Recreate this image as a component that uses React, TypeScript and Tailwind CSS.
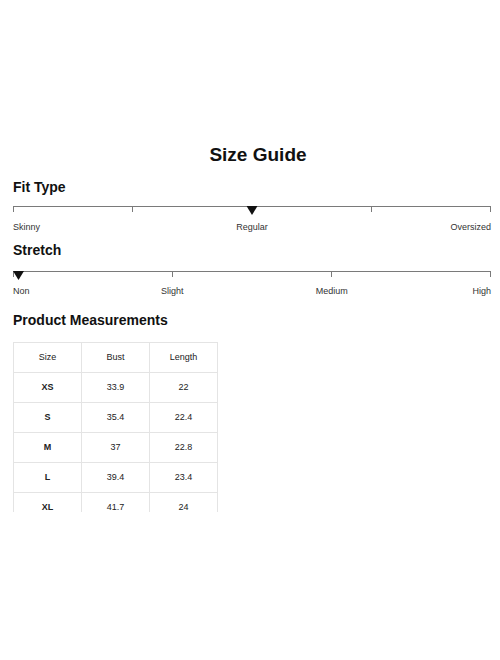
const rows = [
  ["XS", "33.9", "22"],
  ["S", "35.4", "22.4"],
  ["M", "37", "22.8"],
  ["L", "39.4", "23.4"],
  ["XL", "41.7", "24"],
]

function Arrow({ className }: { className: string }) {
  return (
    <svg className={className} width="11" height="9" viewBox="0 0 11 9">
      <path d="M0 0 H11 L5.5 9 Z" fill="#111" />
    </svg>
  )
}

function Ticks({ count }: { count: number }) {
  return (
    <div className="flex justify-between border-t border-[#7a7a7a]">
      {Array.from({ length: count }).map((_, i) => (
        <div key={i} className="w-px h-[5px] bg-[#7a7a7a]" />
      ))}
    </div>
  )
}

export default function App() {
  return (
    <div className="w-[500px] h-[660px] bg-white text-[#222] pt-[143px]" style={{ fontFamily: "'Liberation Sans', Arial, sans-serif" }}>
      <h1 className="text-[19px] leading-[24px] font-bold text-center pl-[16px] text-[#111]">Size Guide</h1>

      <div className="px-[13px] pr-[9px]">
        <h2 className="mt-[11px] text-[14px] leading-[18px] font-bold text-[#111]">Fit Type</h2>
        <div className="relative mt-[10px]">
          <Ticks count={5} />
          <Arrow className="absolute top-0 left-1/2 -translate-x-1/2" />
        </div>
        <div className="grid grid-cols-3 mt-[9px] text-[9px] leading-[12px] text-[#333]">
          <span>Skinny</span>
          <span className="text-center">Regular</span>
          <span className="text-right">Oversized</span>
        </div>

        <h2 className="mt-[8px] text-[14px] leading-[18px] font-bold text-[#111]">Stretch</h2>
        <div className="relative mt-[12px]">
          <Ticks count={4} />
          <Arrow className="absolute top-0 left-0" />
        </div>
        <div className="grid grid-cols-6 mt-[8px] text-[9px] leading-[12px] text-[#333]">
          <span>Non</span>
          <span className="col-span-2 text-center">Slight</span>
          <span className="col-span-2 text-center">Medium</span>
          <span className="text-right">High</span>
        </div>

        <h2 className="mt-[14px] text-[14px] leading-[18px] font-bold text-[#111]">Product Measurements</h2>

        <div className="mt-[13px] h-[170px] overflow-hidden w-[205px]">
          <table className="w-[205px] border-collapse text-[9px] text-[#222] table-fixed">
            <thead>
              <tr className="h-[30px]">
                {["Size", "Bust", "Length"].map((h) => (
                  <th key={h} className="border border-[#e4e4e4] font-normal">{h}</th>
                ))}
              </tr>
            </thead>
            <tbody>
              {rows.map((r) => (
                <tr key={r[0]} className="h-[30px]">
                  <td className="border border-[#e4e4e4] text-center font-bold">{r[0]}</td>
                  <td className="border border-[#e4e4e4] text-center">{r[1]}</td>
                  <td className="border border-[#e4e4e4] text-center">{r[2]}</td>
                </tr>
              ))}
            </tbody>
          </table>
        </div>
      </div>
    </div>
  )
}
